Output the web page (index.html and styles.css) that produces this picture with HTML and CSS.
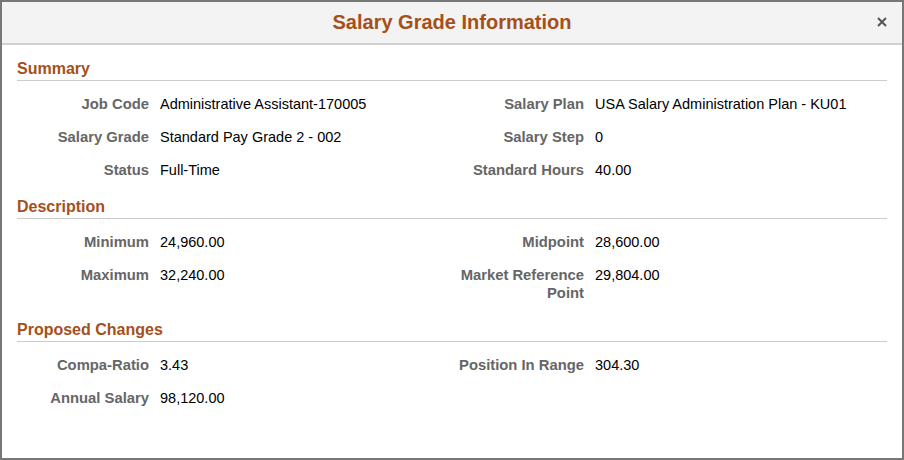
FILE: index.html
```html
<!DOCTYPE html>
<html>

<head>
    <meta charset="UTF-8">
    <title>Salary Grade Information</title>
    <link rel="stylesheet" href="styles.css">
</head>

<body>

    <div class="modal">
        <div class="modal-header">
            <h1>Salary Grade Information</h1>
            <button class="close-btn" title="Close">
                <svg width="10" height="10" viewBox="0 0 10 10">
                    <path d="M1 1 L9 9 M9 1 L1 9" stroke="#555" stroke-width="2" fill="none"/>
                </svg>
            </button>
        </div>

        <div class="modal-body">
            <h2 class="section-title">Summary</h2>
            <div class="fields">
                <div class="field"><span class="label">Job Code</span><span class="value">Administrative Assistant-170005</span></div>
                <div class="field"><span class="label">Salary Plan</span><span class="value">USA Salary Administration Plan - KU01</span></div>
                <div class="field"><span class="label">Salary Grade</span><span class="value">Standard Pay Grade 2 - 002</span></div>
                <div class="field"><span class="label">Salary Step</span><span class="value">0</span></div>
                <div class="field"><span class="label">Status</span><span class="value">Full-Time</span></div>
                <div class="field"><span class="label">Standard Hours</span><span class="value">40.00</span></div>
            </div>

            <h2 class="section-title">Description</h2>
            <div class="fields">
                <div class="field"><span class="label">Minimum</span><span class="value">24,960.00</span></div>
                <div class="field"><span class="label">Midpoint</span><span class="value">28,600.00</span></div>
                <div class="field"><span class="label">Maximum</span><span class="value">32,240.00</span></div>
                <div class="field"><span class="label">Market Reference Point</span><span class="value">29,804.00</span></div>
            </div>

            <h2 class="section-title">Proposed Changes</h2>
            <div class="fields">
                <div class="field"><span class="label">Compa-Ratio</span><span class="value">3.43</span></div>
                <div class="field"><span class="label">Position In Range</span><span class="value">304.30</span></div>
                <div class="field"><span class="label">Annual Salary</span><span class="value">98,120.00</span></div>
            </div>
        </div>
    </div>

</body>

</html>
```

FILE: styles.css
```css
/* Basic Reset */
* {
    box-sizing: border-box;
    margin: 0;
    padding: 0;
}

body {
    font-family: "Liberation Sans", Arial, sans-serif;
    background: #fff;
    color: #000;
}

.modal {
    width: 904px;
    height: 460px;
    border: 2px solid #777;
    background: #fff;
}

.modal-header {
    position: relative;
    height: 43px;
    background: #f3f3f3;
    border-bottom: 2px solid #d0d0d0;
    text-align: center;
}

.modal-header h1 {
    font-size: 20px;
    line-height: 41px;
    font-weight: bold;
    color: #a5501a;
}

.close-btn {
    position: absolute;
    top: 15px;
    right: 15px;
    border: none;
    background: none;
    cursor: pointer;
    line-height: 0;
}

.modal-body {
    padding: 14px 15px 0 15px;
}

.section-title {
    font-size: 16px;
    line-height: 20px;
    font-weight: bold;
    color: #a5501a;
    padding-bottom: 1px;
    border-bottom: 1px solid #ccc;
    margin-top: 3px;
}

.modal-body .section-title:first-child {
    margin-top: 0;
}

.fields {
    display: grid;
    grid-template-columns: 1fr 1fr;
    padding-top: 14px;
}

.field {
    display: flex;
    align-items: flex-start;
    gap: 11px;
    margin-bottom: 15px;
    line-height: 18px;
}

.label {
    flex: 0 0 132px;
    text-align: right;
    font-size: 14.8px;
    font-weight: bold;
    color: #666;
}

.value {
    font-size: 14.5px;
    color: #000;
}
```
